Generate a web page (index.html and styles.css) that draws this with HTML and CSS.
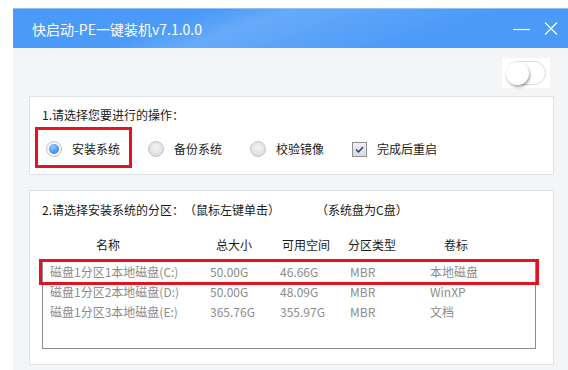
FILE: index.html
```html
<!DOCTYPE html>
<html lang="zh-CN">
<head>
  <meta charset="UTF-8">
  <meta name="viewport" content="width=device-width, initial-scale=1.0">
  <title>快启动-PE一键装机v7.1.0.0</title>
  <link rel="stylesheet" href="styles.css">
</head>
<body>
  <div class="window">
    <!-- barra de titulo -->
    <div class="titlebar">
      <span class="titlebar-text">快启动-PE一键装机v7.1.0.0</span>
      <div class="titlebar-btns">
        <svg class="btn-min" width="17" height="12" viewBox="0 0 17 12"><line x1="0" y1="6.5" x2="17" y2="6.5" stroke="#fff" stroke-width="1.2"/></svg>
        <svg class="btn-close" width="14" height="13" viewBox="0 0 14 13"><path d="M1 0.5 L13 12.5 M13 0.5 L1 12.5" stroke="#fff" stroke-width="1.2" fill="none"/></svg>
      </div>
    </div>

    <div class="content">
      <div class="toggle-row">
        <div class="toggle">
          <span class="toggle-track"><span class="toggle-knob"></span></span>
        </div>
      </div>

      <!-- seccion 1 -->
      <div class="panel panel-ops">
        <p class="panel-title">1.请选择您要进行的操作：</p>
        <div class="options">
          <label class="option is-marked"><span class="radio is-checked"></span><span>安装系统</span></label>
          <label class="option"><span class="radio"></span><span>备份系统</span></label>
          <label class="option"><span class="radio"></span><span>校验镜像</span></label>
          <label class="option"><span class="checkbox"><svg width="9" height="7" viewBox="0 0 9 7"><path d="M1 3.5 L3.5 6 L8 1" stroke="#25387c" stroke-width="1.4" fill="none"/></svg></span><span>完成后重启</span></label>
        </div>
      </div>

      <!-- seccion 2 -->
      <div class="panel panel-disk">
        <p class="panel-title">2.请选择安装系统的分区：（鼠标左键单击）<span class="panel-note">（系统盘为C盘）</span></p>
        <div class="disk-head">
          <span>名称</span><span>总大小</span><span>可用空间</span><span>分区类型</span><span>卷标</span>
        </div>
        <div class="disk-list">
          <div class="disk-row is-marked"><span>磁盘1分区1本地磁盘(C:)</span><span>50.00G</span><span>46.66G</span><span>MBR</span><span>本地磁盘</span></div>
          <div class="disk-row"><span>磁盘1分区2本地磁盘(D:)</span><span>50.00G</span><span>48.09G</span><span>MBR</span><span>WinXP</span></div>
          <div class="disk-row"><span>磁盘1分区3本地磁盘(E:)</span><span>365.76G</span><span>355.97G</span><span>MBR</span><span>文档</span></div>
        </div>
      </div>
    </div>
  </div>
</body>
</html>
```

FILE: styles.css
```css
/* ventana */
*{
  margin: 0;
  padding: 0;
  box-sizing: border-box;
}

:root{
  --title-blue:#4b9af8;
  --mark-red:#e3141f;
  --panel-border:#dfe2e6;
}

body{
  background: #fff;
  font-family: "Noto Sans CJK SC", sans-serif;
  font-size: 12px;
  color: #1a1a1a;
  overflow: hidden;
  text-spacing-trim: space-all;
}

.window{
  margin: 8px 0 0 13px;
  width: 557px;
  height: 362px;
  background: #f4f5f7;
}

/* titulo */
.titlebar{
  height: 40px;
  display: flex;
  align-items: center;
  justify-content: space-between;
  padding: 0 12px 0 19px;
  border-top: 1px solid #8cc1fa;
  background:
    linear-gradient(160deg, rgba(255,255,255,0) 30%, rgba(255,255,255,0.16) 42%, rgba(255,255,255,0.06) 62%, rgba(255,255,255,0) 75%),
    var(--title-blue);
}

.titlebar-text{
  color: #fff;
  font-size: 14px;
  line-height: 20px;
}

.titlebar-btns{
  display: flex;
  align-items: center;
  gap: 14px;
}

.btn-min{
  margin-top: 1px;
}

/* interruptor */
.toggle-row{
  display: flex;
  justify-content: flex-end;
  padding: 10px 20px 0 0;
}

.toggle{
  width: 48px;
  height: 30px;
  background: #fff;
  display: flex;
  align-items: center;
  justify-content: center;
}

.toggle-track{
  width: 40px;
  height: 24px;
  border: 1px solid #dcdcdc;
  border-radius: 12px;
  display: flex;
  align-items: center;
  background: #fff;
}

.toggle-knob{
  width: 23px;
  height: 23px;
  border-radius: 50%;
  background: #fff;
  box-shadow: 1px 2px 3px rgba(0,0,0,0.35);
  margin-left: -1px;
}

/* paneles */
.panel{
  margin: 0 16px;
  background: #fff;
  border: 1px solid var(--panel-border);
}

.panel-ops{
  margin-top: 8px;
  padding: 9px 12px 6px;
}

.panel-disk{
  margin-top: 15px;
  padding: 10px 17px 15px 12px;
}

.panel-title{
  line-height: 18px;
}

.panel-note{
  margin-left: 36px;
}

/* opciones */
.options{
  display: flex;
  gap: 11px;
  margin: 3px 0 0 -4px;
}

.option{
  display: flex;
  align-items: center;
  height: 41px;
  padding: 3px 9px 0 8px;
  gap: 10px;
  line-height: 18px;
}

.option.is-marked{
  outline: 3px solid var(--mark-red);
  outline-offset: -3px;
  padding: 3px 12px 0 11px;
  margin: 0 -3px;
}

.radio{
  width: 16px;
  height: 16px;
  border-radius: 50%;
  border: 1px solid #c4c4c4;
  background: radial-gradient(circle at 50% 40%, #f4f4f4 0%, #e2e2e2 60%, #d4d4d4 100%);
  display: flex;
  align-items: center;
  justify-content: center;
}

.radio.is-checked{
  background: radial-gradient(circle, #fff 0%, #f1f1f1 100%);
}

.radio.is-checked::after{
  content: "";
  width: 10px;
  height: 10px;
  border-radius: 50%;
  background: radial-gradient(circle at 40% 30%, #9ccbff 0%, #4c98f5 55%, #2a74e0 100%);
}

.checkbox{
  width: 15px;
  height: 15px;
  border: 1px solid #8f9090;
  background: linear-gradient(#eef0f4, #d6dbe3);
  display: flex;
  align-items: center;
  justify-content: center;
}

/* tabla de particiones */
.disk-head{
  display: grid;
  grid-template-columns: 120px 66px 66px 96px auto;
  padding-left: 54px;
  margin-top: 17px;
  line-height: 18px;
}

.disk-list{
  margin-top: 7px;
  height: 88px;
  border: 1px solid #8a8d94;
}

.disk-row{
  display: grid;
  grid-template-columns: 160px 70px 70px 80px auto;
  padding-left: 7px;
  height: 20px;
  line-height: 20px;
  color: #8c8c8c;
}

.disk-row.is-marked{
  outline: 3px solid var(--mark-red);
  outline-offset: 0;
  margin: 0 -1px;
  padding-left: 8px;
}
```
